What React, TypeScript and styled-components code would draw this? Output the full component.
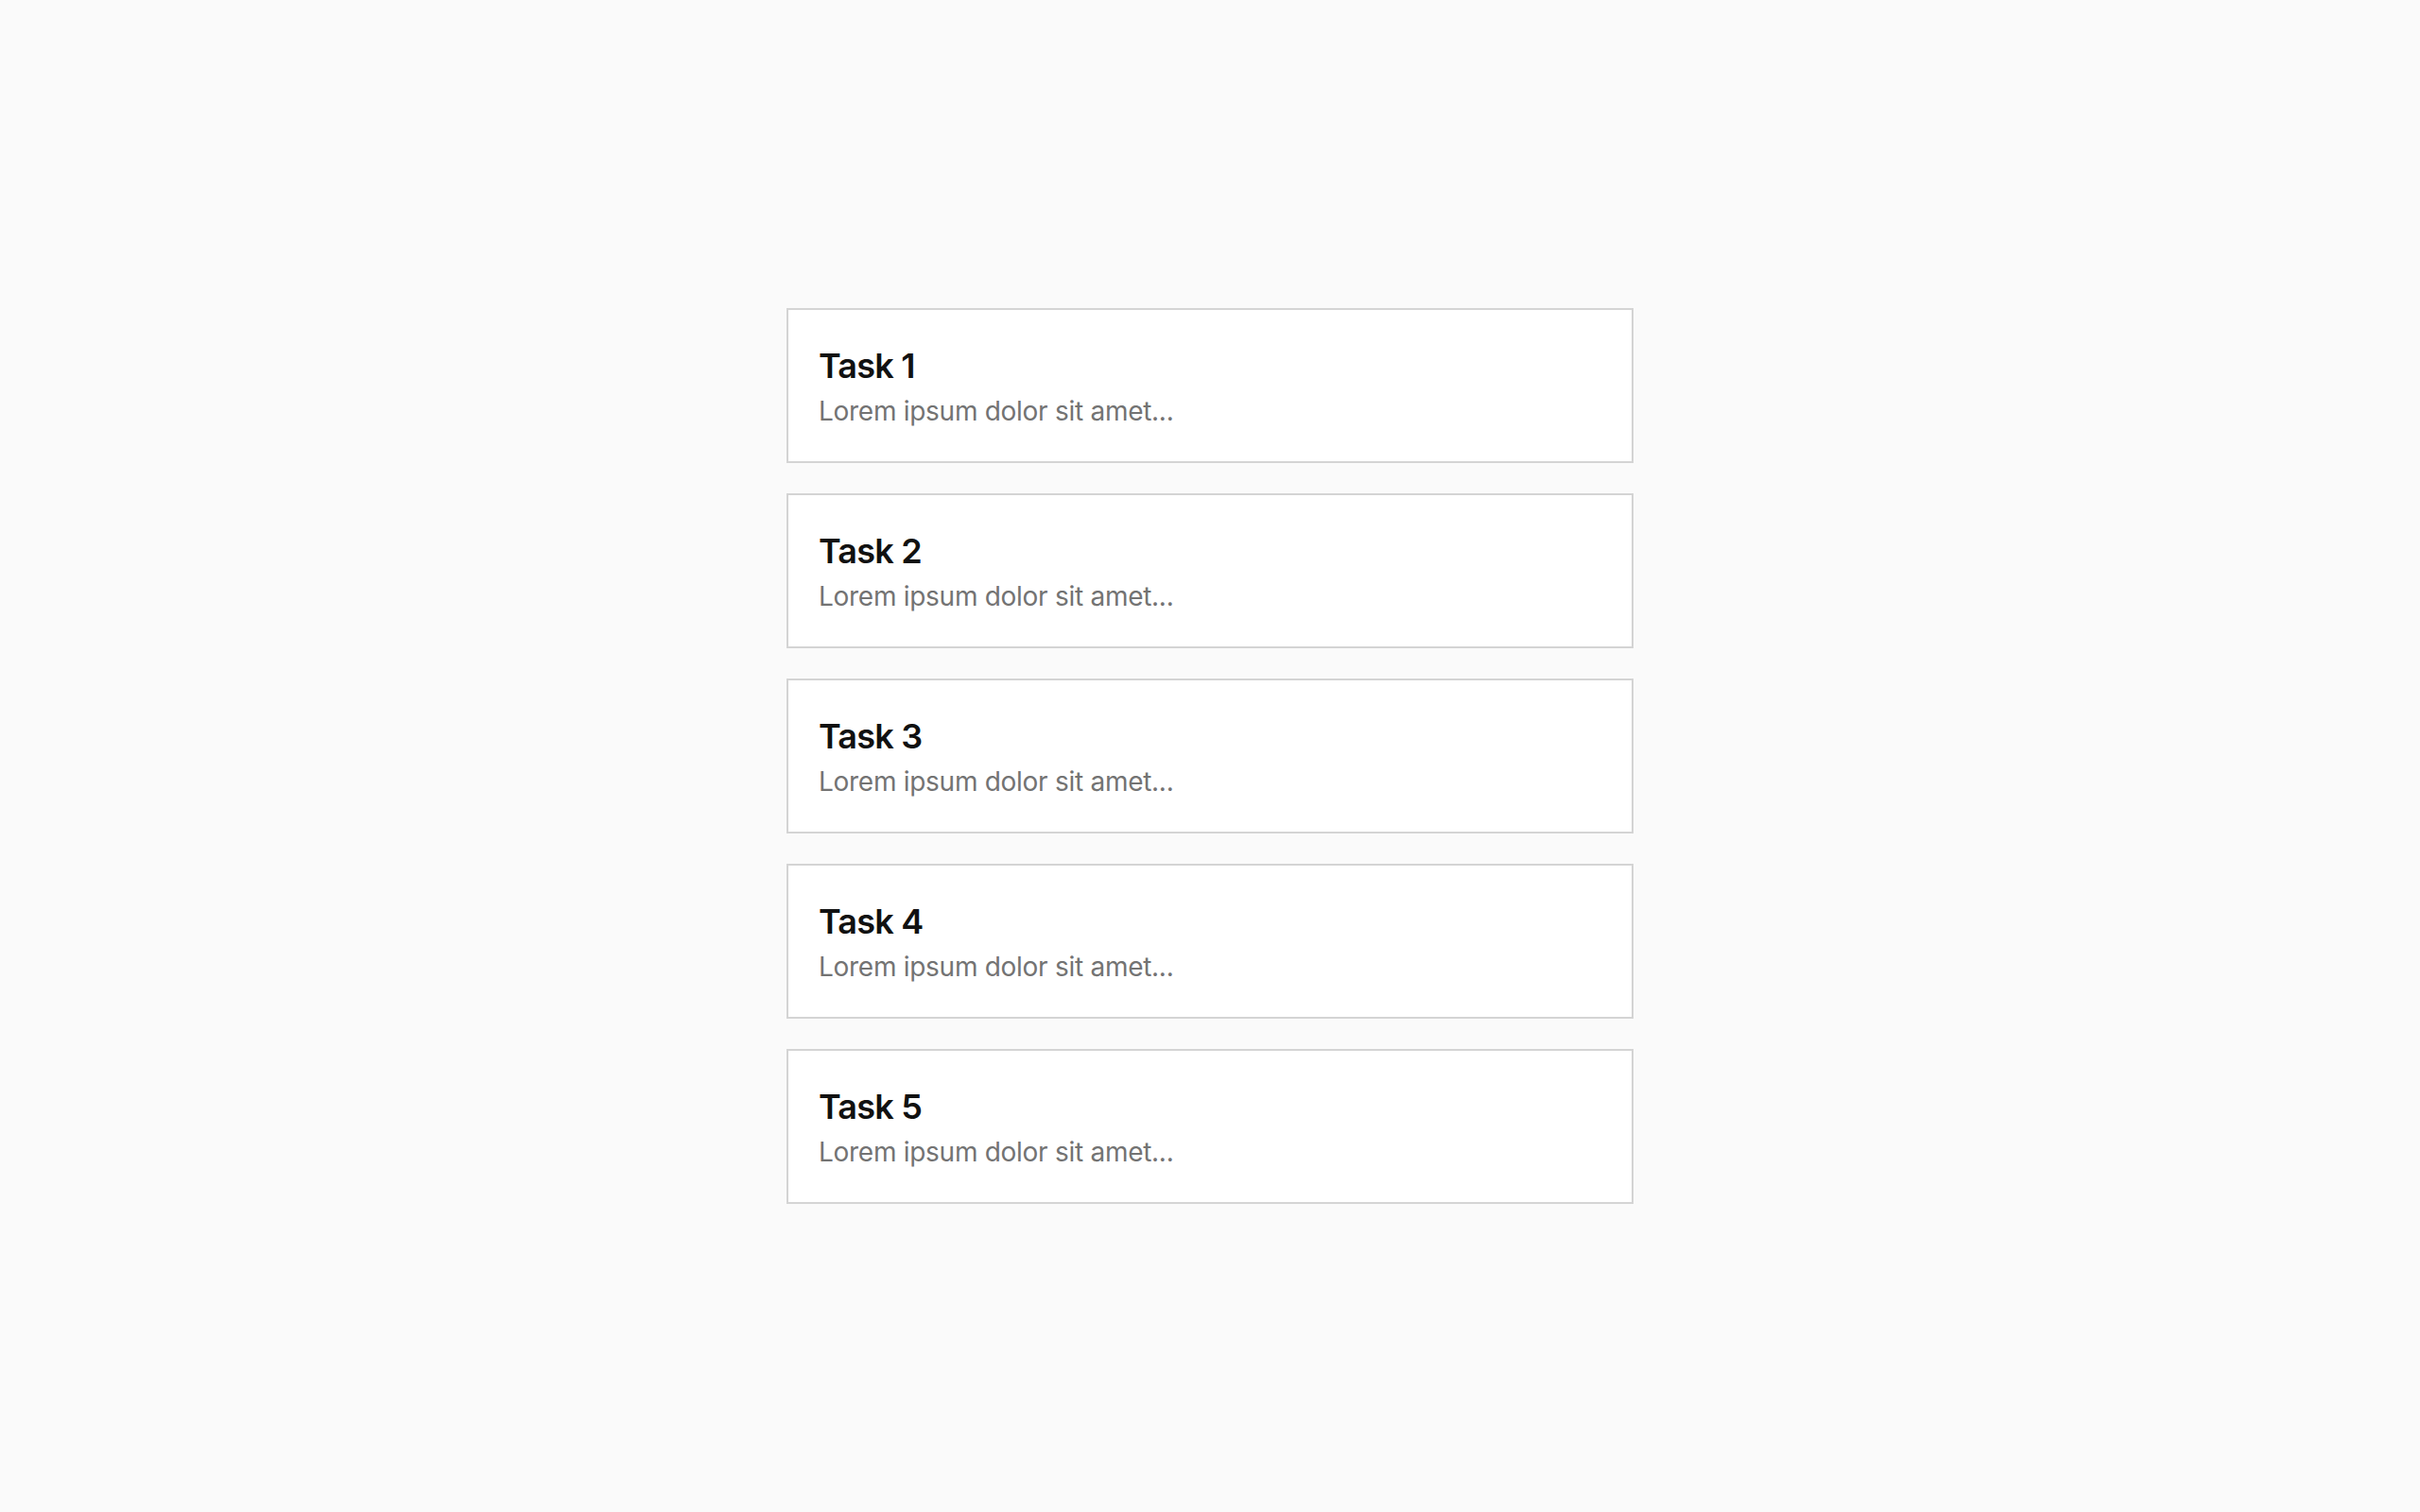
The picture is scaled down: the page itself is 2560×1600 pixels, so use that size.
import React, { ReactElement } from 'react';
import styled, { createGlobalStyle } from 'styled-components';

const GlobalStyle = createGlobalStyle`
  html, body {
    margin: 0;
    padding: 0;
    background: #fafafa;
  }

  body {
    font-family: Inter, "Noto Sans", "Liberation Sans", sans-serif;
    line-height: 1.5;
    color: #111111;
  }

  * {
    box-sizing: border-box;
  }
`;

const Page = styled.main`
  display: flex;
  align-items: center;
  justify-content: center;
  min-height: 1600px;
`;

const List = styled.ul`
  list-style: none;
  margin: 0;
  padding: 0;
  width: 896px;
  display: flex;
  flex-direction: column;
  gap: 32px;
`;

const Card = styled.li`
  background: #ffffff;
  border: 2px solid #d4d4d4;
  padding: 32px;
`;

const Title = styled.h3`
  margin: 0;
  font-size: 36px;
  font-weight: 600;
  line-height: 54px;
  letter-spacing: -0.8px;
  color: #111111;
`;

const Description = styled.p`
  margin: 0;
  font-size: 28px;
  line-height: 42px;
  letter-spacing: -0.28px;
  color: #737373;
`;

interface Task {
  id: number;
  title: string;
  description: string;
}

const tasks: Task[] = [1, 2, 3, 4, 5].map(function(n) {
  return { id: n, title: `Task ${n}`, description: 'Lorem ipsum dolor sit amet...' };
});

export default function App(): ReactElement {
  return (
    <>
      <GlobalStyle />
      <Page>
        <List>
          {tasks.map(function(task) {
            return (
              <Card key={task.id}>
                <Title>{task.title}</Title>
                <Description>{task.description}</Description>
              </Card>
            );
          })}
        </List>
      </Page>
    </>
  );
}
